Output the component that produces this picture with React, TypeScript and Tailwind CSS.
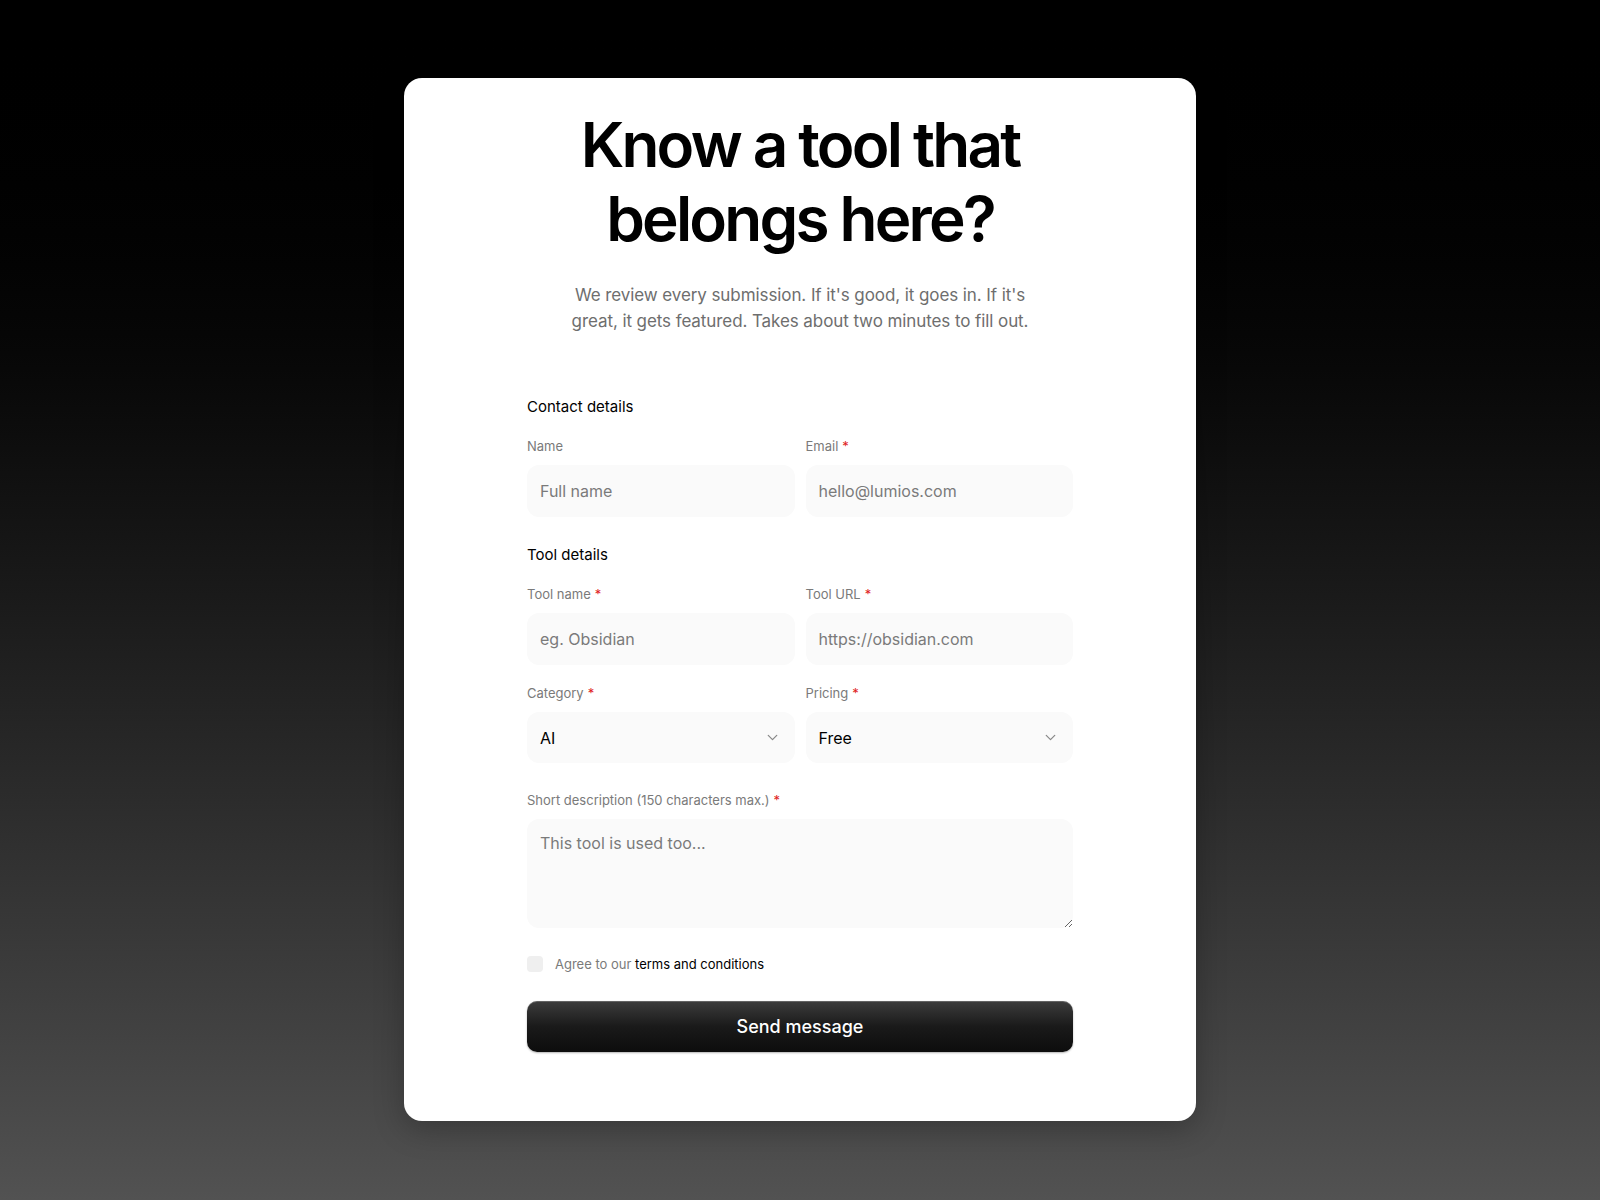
import React from 'react';
import { ChevronDown } from 'lucide-react';

const font = { fontFamily: 'Inter, "Noto Sans", sans-serif' };

const Label: React.FC<{ text: string; required?: boolean }> = ({ text, required }) => (
  <label className="block text-[13px] leading-4 text-[#7a7a7a] mb-[11px]">
    {text}
    {required && <span className="text-[#e02020] ml-1">*</span>}
  </label>
);

const Field: React.FC<{ label: string; required?: boolean; placeholder: string }> = ({
  label,
  required,
  placeholder,
}) => (
  <div className="flex-1">
    <Label text={label} required={required} />
    <input
      placeholder={placeholder}
      className="w-full h-[52px] rounded-xl bg-[#fafafa] px-[13px] text-base text-black placeholder:text-[#7a7a7a] outline-none"
    />
  </div>
);

const SelectField: React.FC<{ label: string; value: string }> = ({ label, value }) => (
  <div className="flex-1">
    <Label text={label} required />
    <div className="w-full h-[51px] rounded-xl bg-[#fafafa] pl-[13px] pr-[14px] flex items-center justify-between">
      <span className="text-base text-black">{value}</span>
      <ChevronDown size={17} strokeWidth={1.75} className="text-[#888]" />
    </div>
  </div>
);

const App: React.FC = () => (
  <div
    className="min-h-[1200px] w-full bg-gradient-to-b from-[#000000] to-[#525252] pt-[78px] pb-[79px]"
    style={font}
  >
    <div className="mx-auto w-[792px] bg-white rounded-[18px] shadow-[0_8px_30px_rgba(0,0,0,0.25)] pt-[30px] pb-[69px]">
      <h1 className="text-center text-[62px] leading-[74px] font-semibold tracking-[-0.045em] text-black">
        Know a tool that
        <br />
        belongs here?
      </h1>
      <p className="mt-[26px] text-center text-[17px] leading-[26px] tracking-[-0.005em] text-[#6e6e6e] whitespace-nowrap">
        We review every submission. If it's good, it goes in. If it's
        <br />
        great, it gets featured. Takes about two minutes to fill out.
      </p>

      <form className="mx-auto w-[546px] mt-[63px]">
        <h2 className="text-[15px] leading-5 text-black mb-[21px]">Contact details</h2>
        <div className="flex gap-[11px]">
          <Field label="Name" placeholder="Full name" />
          <Field label="Email" required placeholder="hello@lumios.com" />
        </div>

        <h2 className="text-[15px] leading-5 text-black mt-[28px] mb-[21px]">Tool details</h2>
        <div className="flex gap-[11px]">
          <Field label="Tool name" required placeholder="eg. Obsidian" />
          <Field label="Tool URL" required placeholder="https://obsidian.com" />
        </div>
        <div className="flex gap-[11px] mt-[20px]">
          <SelectField label="Category" value="AI" />
          <SelectField label="Pricing" value="Free" />
        </div>

        <div className="mt-[29px]">
          <Label text="Short description (150 characters max.)" required />
          <textarea
            placeholder="This tool is used too..."
            className="block w-full h-[109px] rounded-xl bg-[#fafafa] px-[13px] py-[12px] text-base text-black placeholder:text-[#7a7a7a] outline-none"
          />
        </div>

        <label className="mt-[28px] flex items-center gap-3 text-[13px] leading-4">
          <span className="w-4 h-4 rounded bg-[#efefef]" />
          <span className="text-[#7a7a7a]">
            Agree to our <span className="text-black">terms and conditions</span>
          </span>
        </label>

        <button
          type="button"
          className="mt-[29px] w-full h-[51px] rounded-[10px] bg-gradient-to-b from-[#3d3d3d] via-[#1a1a1a] to-[#0d0d0d] text-white text-[18px] font-medium shadow-[inset_0_1px_0_rgba(255,255,255,0.2),0_1px_2px_rgba(0,0,0,0.3)]"
        >
          Send message
        </button>
      </form>
    </div>
  </div>
);

export default App;
